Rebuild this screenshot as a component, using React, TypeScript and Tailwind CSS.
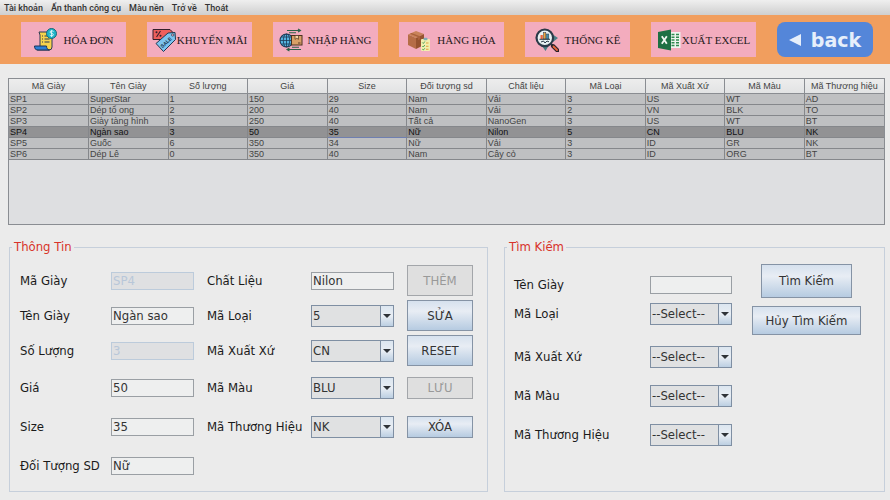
import React, { useId } from "react";
import type { ReactNode } from "react";

const UI_FONT = "font-['DejaVu_Sans_Condensed','Noto_Sans',sans-serif]";
const LABEL_ROW = "flex items-center whitespace-nowrap text-[#1a1a1a]";

/* ---------- toolbar icons ---------- */

function InvoiceIcon() {
  return (
    <svg viewBox="0 0 24 24" className="size-6 shrink-0" aria-hidden="true">
      <path d="M5 4h13v15a3 3 0 0 1-3 3H3l3-3V7L5 4z" fill="#f7d34c" stroke="#2b3a55" strokeWidth="1" />
      <path d="M.5 18h12c0 2 1 4 3 4H4c-3 0-3.500-2-3.500-4z" fill="#2f7fd6" stroke="#1d3557" strokeWidth="1" />
      <path d="M8 8h1M10.500 8h3M8 11h1M10.500 11h5M8 14h1M10.500 14h5" stroke="#2b3a55" strokeWidth="1.200" />
      <circle cx="17.500" cy="5.500" r="5" fill="#1fb5c9" stroke="#16677a" strokeWidth="1" />
      <path d="M19.500 3.500c-1-1-3.500-.8-3.500.6 0 1.600 3.400.9 3.400 2.600 0 1.400-2.600 1.500-3.700.4M17.600 2.200v6.800" fill="none" stroke="#e8f8fa" strokeWidth=".9" />
    </svg>
  );
}

function SaleIcon() {
  return (
    <svg viewBox="0 0 24 24" className="size-6 shrink-0" aria-hidden="true">
      <path d="M1 1.500h17l4 4-5 6H1z" fill="#ee5f5b" stroke="#33202a" strokeWidth="1" />
      <path d="M4.500 9l4-6" stroke="#33202a" strokeWidth="1.100" />
      <circle cx="4.500" cy="4.300" r="1" fill="#33202a" />
      <circle cx="8.500" cy="7.800" r="1" fill="#33202a" />
      <path d="M4 15.500L16 5l7-.5.500 7L11.500 23.500z" fill="#7cc4ee" stroke="#1d3a52" strokeWidth="1" />
      <circle cx="20.700" cy="7" r="1.200" fill="#f7b5c0" stroke="#1d3a52" strokeWidth=".7" />
      <text x="10.500" y="20.300" transform="rotate(-43 10.500 20.300)" className="font-['Liberation_Sans',sans-serif] font-bold" fontSize="5" fill="#16324a">
        SALE
      </text>
    </svg>
  );
}

function ImportIcon() {
  return (
    <svg viewBox="0 0 24 24" className="size-6 shrink-0" aria-hidden="true">
      <path d="M8 2.500h13M19 1l2.500 1.500L19 4M10 4.800h7M22 21.500H8M10.500 20L8 21.500l2.500 1.500M13 19.300h7" fill="none" stroke="#2c6148" strokeWidth="1.100" />
      <circle cx="7.500" cy="12.500" r="6.500" fill="#56b4e0" stroke="#1d3a55" strokeWidth="1.100" />
      <path d="M1 12.500h13M2.500 9h10M2.500 16h10M7.500 6v13" stroke="#1d3a55" strokeWidth=".8" />
      <ellipse cx="7.500" cy="12.500" rx="3.200" ry="6.500" fill="none" stroke="#1d3a55" strokeWidth=".8" />
      <rect x="12.500" y="7.500" width="10.500" height="9.500" fill="#d9a066" stroke="#4a3020" strokeWidth="1" />
      <path d="M16 7.500h3.500v3.800l-1.700-1-1.800 1z" fill="#f3d9a8" stroke="#4a3020" strokeWidth=".7" />
      <path d="M19 15h2.500" stroke="#4a3020" strokeWidth=".9" />
    </svg>
  );
}

function GoodsIcon() {
  return (
    <svg viewBox="0 0 24 24" className="size-6 shrink-0" aria-hidden="true">
      <path d="M1 6.500L9 3l8 3-8 4z" fill="#c9835a" />
      <path d="M1 6.500L9 10v11l-8-4z" fill="#b56d47" />
      <path d="M17 6L9 10v11l8-4z" fill="#96532f" />
      <path d="M4.500 5L13 8.200v3l-2 1V9L3 5.700z" fill="#a9613c" />
      <rect x="14" y="11" width="9" height="12" rx="1" fill="#f3efae" />
      <rect x="16.500" y="9.800" width="4" height="2.500" rx="1" fill="#7fb0b6" />
      <path d="M15.300 14.500l1 1 1.500-2M15.300 18l1 1 1.500-2M15.300 21.200l1 .8 1.500-1.700" fill="none" stroke="#4fa35a" strokeWidth="1" />
      <path d="M19 15h2.500M19 18.300h2.500M19 21.300h2.500" stroke="#e0a13c" strokeWidth="1.100" />
    </svg>
  );
}

function StatsIcon() {
  return (
    <svg viewBox="0 0 24 24" className="size-6 shrink-0" aria-hidden="true">
      <path d="M17 6l6 4-5 4zM7 18l3.500 5 3-5z" fill="#4b7f86" />
      <path d="M16 16l2.500 2.500" stroke="#2b3a48" strokeWidth="2" />
      <path d="M18 18l4.500 4.500" stroke="#2b2228" strokeWidth="4" strokeLinecap="round" />
      <path d="M18.500 18.500l3.500 3.500" stroke="#e9663c" strokeWidth="1.800" strokeLinecap="round" />
      <circle cx="9.800" cy="9.800" r="8.300" fill="#e9f2f3" stroke="#2b3a48" strokeWidth="2.200" />
      <rect x="5.500" y="7" width="2.300" height="4" fill="#e9663c" />
      <rect x="8.500" y="4.500" width="2.300" height="6.500" fill="#f0a63c" stroke="#2b3a48" strokeWidth=".5" />
      <rect x="11.500" y="6" width="2.300" height="5" fill="#3b8fb0" stroke="#2b3a48" strokeWidth=".5" />
      <path d="M4.500 11.300h10.500M6 14l2.500-1 1.500 2 2-2 2 .8" fill="none" stroke="#2b3a48" strokeWidth="1" />
    </svg>
  );
}

function ExcelIcon() {
  return (
    <svg viewBox="0 0 24 24" className="size-6 shrink-0" aria-hidden="true">
      <rect x="11" y="4" width="12.500" height="16" fill="#eef4ef" />
      <path d="M14.500 6.500h3M19 6.500h3M14.500 9.300h3M19 9.300h3M14.500 12h3M19 12h3M14.500 14.700h3M19 14.700h3M14.500 17.400h3M19 17.400h3" stroke="#2f8a50" strokeWidth="1.500" />
      <path d="M1 4l13-2.500v21L1 20z" fill="#1d7044" />
      <path d="M4.800 8.200l5 7.600M9.800 8.200l-5 7.600" stroke="#f2f7f3" strokeWidth="1.800" />
    </svg>
  );
}

const TOOLS = [
  { label: "HÓA ĐƠN", icon: <InvoiceIcon />, gap: "gap-1.5" },
  { label: "KHUYẾN MÃI", icon: <SaleIcon />, gap: "gap-px" },
  { label: "NHẬP HÀNG", icon: <ImportIcon />, gap: "gap-1" },
  { label: "HÀNG HÓA", icon: <GoodsIcon />, gap: "gap-1.5" },
  { label: "THỐNG KÊ", icon: <StatsIcon />, gap: "gap-1.5" },
  { label: "XUẤT EXCEL", icon: <ExcelIcon />, gap: "gap-px" },
];

const MENUS = ["Tài khoản", "Ẩn thanh công cụ", "Màu nền", "Trở về", "Thoát"];

const COLUMNS = [
  "Mã Giày", "Tên Giày", "Số lượng", "Giá", "Size", "Đối tượng sd",
  "Chất liệu", "Mã Loại", "Mã Xuất Xứ", "Mã Màu", "Mã Thương hiệu",
];

const ROWS = [
  ["SP1", "SuperStar", "1", "150", "29", "Nam", "Vải", "3", "US", "WT", "AD"],
  ["SP2", "Dép tổ ong", "2", "200", "40", "Nam", "Vải", "2", "VN", "BLK", "TO"],
  ["SP3", "Giày tàng hình", "3", "250", "40", "Tất cả", "NanoGen", "3", "US", "WT", "BT"],
  ["SP4", "Ngàn sao", "3", "50", "35", "Nữ", "Nilon", "5", "CN", "BLU", "NK"],
  ["SP5", "Guốc", "6", "350", "34", "Nữ", "Vải", "3", "ID", "GR", "NK"],
  ["SP6", "Dép Lê", "0", "350", "40", "Nam", "Cây cỏ", "3", "ID", "ORG", "BT"],
];
const SELECTED_ROW = 3;
const FOCUSED_COLUMN = 4;

/* ---------- form controls ---------- */

function TextField({ label, value = "", disabled = false }: { label: string; value?: string; disabled?: boolean }) {
  const id = useId();
  return (
    <>
      <label htmlFor={id} className={LABEL_ROW}>{label}</label>
      <input
        id={id}
        defaultValue={value}
        disabled={disabled}
        className="h-[18px] w-full min-w-0 self-center border border-[#9a9fa4] bg-[#eeefef] px-px text-[#333] disabled:border-[#bccbdb] disabled:bg-[#dfe0e2] disabled:text-[#b8c7d9]"
      />
    </>
  );
}

function Combo({ label, value }: { label: string; value: string }) {
  const id = useId();
  return (
    <>
      <label htmlFor={id} className={LABEL_ROW}>{label}</label>
      <div className="relative h-[22px] self-center">
        <select id={id} defaultValue={value} className="h-full w-full appearance-none border border-[#7f8fa3] bg-[#e0e1e2] pr-3.5 pl-px text-[#333]">
          <option>{value}</option>
        </select>
        <span className="pointer-events-none absolute inset-y-0 right-0 flex w-[14px] items-center justify-center border border-[#7f8fa3] bg-linear-to-b from-[#dce6f0] via-[#e9eef4] to-[#bccfe2]">
          <span className="border-x-4 border-t-4 border-x-transparent border-t-[#2f3338]" />
        </span>
      </div>
    </>
  );
}

function PushButton({ children, disabled = false, className = "" }: { children: ReactNode; disabled?: boolean; className?: string }) {
  return (
    <button
      type="button"
      disabled={disabled}
      className={`self-center border border-[#8593a5] bg-linear-to-b from-[#d6e1ee] via-[#e8edf4] via-35% to-[#b6cbe1] whitespace-nowrap text-[#333] disabled:border-[#a3a6aa] disabled:bg-[#dfdfdf] disabled:bg-none disabled:text-[#999] ${className}`}
    >
      {children}
    </button>
  );
}

function Panel({ title, children }: { title: string; children: ReactNode }) {
  return (
    <fieldset className="min-w-0 border border-[#c6cfdb]">
      <legend className="ml-0.5 h-[18px] px-0.5 leading-[18px] text-[#d8332a]">{title}</legend>
      {children}
    </fieldset>
  );
}

export default function App() {
  return (
    <div className={`min-h-screen bg-[#ebebeb] text-[13px] leading-4 ${UI_FONT}`}>
      <nav className="flex h-[15px] items-center gap-2 bg-linear-to-b from-[#efefef] to-[#cfcfcf] px-1 font-['Roboto',sans-serif] text-[9px] leading-3 font-medium text-[#333]">
        {MENUS.map((menu) => (
          <button key={menu} type="button" className="whitespace-nowrap">{menu}</button>
        ))}
      </nav>

      <header className="flex gap-[21px] bg-[#f19e5e] py-[7px] pr-[17px] pl-[21px]">
        {TOOLS.map((tool) => (
          <button
            key={tool.label}
            type="button"
            className={`flex h-[35px] flex-[105] items-center justify-center bg-[#f3acbe] font-['Liberation_Serif',serif] text-[11px] whitespace-nowrap text-[#261a20] ${tool.gap}`}
          >
            {tool.icon}
            {tool.label}
          </button>
        ))}
        <button type="button" className="flex h-[35px] flex-[96] items-center justify-center gap-2.5 rounded-lg bg-[#5486d9] font-['DejaVu_Sans',sans-serif] text-[19px] leading-6 font-bold text-[#e6effb]">
          <span className="border-y-[6px] border-r-[12px] border-y-transparent border-r-[#e6effb]" />
          back
        </button>
      </header>

      <main className="px-2 pt-[14px] pr-[5px] pb-2">
        <div className="min-h-[147px] border border-[#8a8d92] bg-[#dedfe1]">
          <table className="w-full table-fixed border-collapse font-['Liberation_Sans',sans-serif] text-[9px] leading-[10px] text-[#444]">
            <thead>
              <tr className="h-[14px] bg-linear-to-b from-[#ededed] to-[#e2e3e4]">
                {COLUMNS.map((name) => (
                  <th key={name} className="border-r border-b border-[#8a8d92] p-0 font-normal whitespace-nowrap last:border-r-0">{name}</th>
                ))}
              </tr>
            </thead>
            <tbody>
              {ROWS.map((row, r) => (
                <tr key={row[0]} className={r === SELECTED_ROW ? "h-[11px] bg-[#929294] text-[#111]" : "h-[11px] bg-[#bfc0c2]"}>
                  {row.map((cell, c) => (
                    <td
                      key={COLUMNS[c]}
                      className={`border-r border-b p-0 pl-px whitespace-nowrap last:border-r-0 ${
                        r === SELECTED_ROW && c === FOCUSED_COLUMN ? "border-r-[#85878b] border-b-[#6f7fb0]" : "border-[#85878b]"
                      }`}
                    >
                      {cell}
                    </td>
                  ))}
                </tr>
              ))}
            </tbody>
          </table>
        </div>

        <div className="mt-[13px] grid grid-cols-[minmax(0,479fr)_minmax(0,381fr)] gap-4 pl-px">
          <Panel title="Thông Tin">
            <div className="grid grid-cols-[minmax(0,78fr)_minmax(0,83fr)_minmax(0,91fr)_minmax(0,83fr)_minmax(0,66fr)] grid-rows-[35px_35px_35px_39px_39px_39px] gap-x-[13px] pt-[7px] pr-[14px] pb-1.5 pl-[10px]">
              <TextField label="Mã Giày" value="SP4" disabled />
              <TextField label="Chất Liệu" value="Nilon" />
              <PushButton disabled className="h-[31px]">THÊM</PushButton>

              <TextField label="Tên Giày" value="Ngàn sao" />
              <Combo label="Mã Loại" value="5" />
              <PushButton className="h-[31px]">SỬA</PushButton>

              <TextField label="Số Lượng" value="3" disabled />
              <Combo label="Mã Xuất Xứ" value="CN" />
              <PushButton className="h-[31px]">RESET</PushButton>

              <TextField label="Giá" value="50" />
              <Combo label="Mã Màu" value="BLU" />
              <PushButton disabled className="h-[22px]">LƯU</PushButton>

              <TextField label="Size" value="35" />
              <Combo label="Mã Thương Hiệu" value="NK" />
              <PushButton className="h-[22px]">XÓA</PushButton>

              <TextField label="Đối Tượng SD" value="Nữ" />
            </div>
          </Panel>

          <Panel title="Tìm Kiếm">
            <div className="flex gap-[20px] pt-2 pr-[23px] pb-1.5 pl-[9px]">
              <div className="flex flex-1 flex-col gap-[21px] pt-2.5">
                <div className="grid auto-rows-[22px] grid-cols-[minmax(0,136fr)_minmax(0,82fr)] gap-y-[7px]">
                  <TextField label="Tên Giày" />
                  <Combo label="Mã Loại" value="--Select--" />
                </div>
                <div className="grid auto-rows-[22px] grid-cols-[minmax(0,136fr)_minmax(0,82fr)] gap-y-[17px]">
                  <Combo label="Mã Xuất Xứ" value="--Select--" />
                  <Combo label="Mã Màu" value="--Select--" />
                  <Combo label="Mã Thương Hiệu" value="--Select--" />
                </div>
              </div>
              <div className="flex flex-col gap-2">
                <PushButton className="h-[34px] w-[91px]">Tìm Kiếm</PushButton>
                <PushButton className="h-[29px] w-[109px]">Hủy Tìm Kiếm</PushButton>
              </div>
            </div>
          </Panel>
        </div>
      </main>
    </div>
  );
}
